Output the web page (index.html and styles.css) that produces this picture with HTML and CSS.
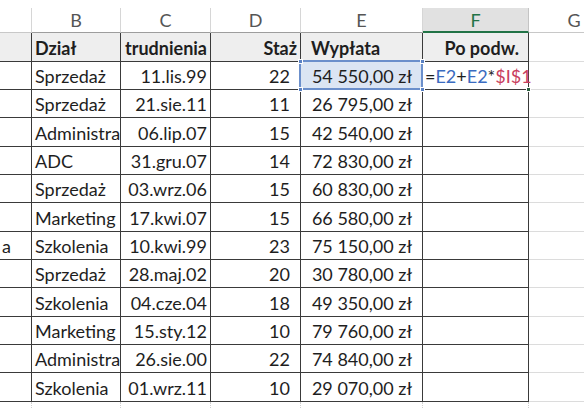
FILE: index.html
```html
<!DOCTYPE html>
<html lang="pl">
<head>
<meta charset="utf-8">
<title>Arkusz</title>
<link rel="stylesheet" href="styles.css">
</head>
<body>
<div class="sheet">
  <div class="row hdr">
    <div class="c"></div>
    <div class="c">B</div>
    <div class="c">C</div>
    <div class="c">D</div>
    <div class="c">E</div>
    <div class="c act">F</div>
    <div class="c g">G</div>
  </div>
  <div class="row r1">
    <div class="c"></div>
    <div class="c bold">Dział</div>
    <div class="c bold right">trudnienia</div>
    <div class="c bold right">Staż</div>
    <div class="c bold indent">Wypłata</div>
    <div class="c bold right pad">Po podw.</div>
    <div class="c g"></div>
  </div>
  <div class="row">
    <div class="c"></div>
    <div class="c">Sprzedaż</div>
    <div class="c right">11.lis.99</div>
    <div class="c right num">22</div>
    <div class="c right num sel">54 550,00 zł<span class="h tl"></span><span class="h tr"></span><span class="h bl"></span><span class="h br"></span></div>
    <div class="c edit"><span>=</span><span class="ref1">E2</span><span>+</span><span class="ref1">E2</span><span>*</span><span class="ref2">$I$1</span><span class="caret"></span><span class="h fh"></span></div>
    <div class="c g"></div>
  </div>
  <div class="row">
    <div class="c"></div>
    <div class="c">Sprzedaż</div>
    <div class="c right">21.sie.11</div>
    <div class="c right num">11</div>
    <div class="c right num">26 795,00 zł</div>
    <div class="c"></div>
    <div class="c g"></div>
  </div>
  <div class="row tall">
    <div class="c"></div>
    <div class="c">Administracja</div>
    <div class="c right">06.lip.07</div>
    <div class="c right num">15</div>
    <div class="c right num">42 540,00 zł</div>
    <div class="c"></div>
    <div class="c g"></div>
  </div>
  <div class="row">
    <div class="c"></div>
    <div class="c">ADC</div>
    <div class="c right">31.gru.07</div>
    <div class="c right num">14</div>
    <div class="c right num">72 830,00 zł</div>
    <div class="c"></div>
    <div class="c g"></div>
  </div>
  <div class="row">
    <div class="c"></div>
    <div class="c">Sprzedaż</div>
    <div class="c right">03.wrz.06</div>
    <div class="c right num">15</div>
    <div class="c right num">60 830,00 zł</div>
    <div class="c"></div>
    <div class="c g"></div>
  </div>
  <div class="row tall">
    <div class="c"></div>
    <div class="c">Marketing</div>
    <div class="c right">17.kwi.07</div>
    <div class="c right num">15</div>
    <div class="c right num">66 580,00 zł</div>
    <div class="c"></div>
    <div class="c g"></div>
  </div>
  <div class="row">
    <div class="c tight">a</div>
    <div class="c">Szkolenia</div>
    <div class="c right">10.kwi.99</div>
    <div class="c right num">23</div>
    <div class="c right num">75 150,00 zł</div>
    <div class="c"></div>
    <div class="c g"></div>
  </div>
  <div class="row">
    <div class="c"></div>
    <div class="c">Sprzedaż</div>
    <div class="c right">28.maj.02</div>
    <div class="c right num">20</div>
    <div class="c right num">30 780,00 zł</div>
    <div class="c"></div>
    <div class="c g"></div>
  </div>
  <div class="row tall">
    <div class="c"></div>
    <div class="c">Szkolenia</div>
    <div class="c right">04.cze.04</div>
    <div class="c right num">18</div>
    <div class="c right num">49 350,00 zł</div>
    <div class="c"></div>
    <div class="c g"></div>
  </div>
  <div class="row">
    <div class="c"></div>
    <div class="c">Marketing</div>
    <div class="c right">15.sty.12</div>
    <div class="c right num">10</div>
    <div class="c right num">79 760,00 zł</div>
    <div class="c"></div>
    <div class="c g"></div>
  </div>
  <div class="row">
    <div class="c"></div>
    <div class="c">Administracja</div>
    <div class="c right">26.sie.00</div>
    <div class="c right num">22</div>
    <div class="c right num">74 840,00 zł</div>
    <div class="c"></div>
    <div class="c g"></div>
  </div>
  <div class="row tall">
    <div class="c"></div>
    <div class="c">Szkolenia</div>
    <div class="c right">01.wrz.11</div>
    <div class="c right num">10</div>
    <div class="c right num">29 070,00 zł</div>
    <div class="c"></div>
    <div class="c g"></div>
  </div>
  <div class="row tail">
    <div class="c"></div>
    <div class="c"></div>
    <div class="c"></div>
    <div class="c"></div>
    <div class="c"></div>
    <div class="c"></div>
    <div class="c g"></div>
  </div>
</div>
</body>
</html>
```
FILE: styles.css
```css
html, body {
  margin: 0;
  background: #ffffff;
}
body {
  font-family: Lato, "Open Sans", "DejaVu Sans", sans-serif;
  overflow: hidden;
}
.sheet {
  width: 584px;
  height: 409px;
  padding-top: 8px;
  box-sizing: border-box;
  overflow: hidden;
}
.row {
  display: grid;
  grid-template-columns: 32px 89px 90px 90px 122px 106px 90px;
  height: 28px;
}
.row.tall { height: 29px; }
.c {
  box-sizing: border-box;
  display: flex;
  align-items: center;
  white-space: nowrap;
  overflow: hidden;
  padding: 1px 3px 0 3px;
  font-size: 18px;
  color: #1e1e1e;
  border-right: 1px solid #3a3a3a;
  border-bottom: 1px solid #3a3a3a;
}
.c.g {
  border-right: none;
  border-bottom: 1px solid #dcdcdc;
}
.right { justify-content: flex-end; }
.num { padding-right: 10px; }
.pad { padding-right: 9px; }
.indent { padding-left: 10px; }
.bold { font-weight: 700; }
.tight { padding-left: 2px; }

/* column headers */
.hdr { height: 25px; }
.hdr .c {
  justify-content: center;
  color: #555555;
  font-size: 18px;
  padding: 0;
  border-right: 1px solid #d6d6d6;
  border-bottom: 1px solid #9d9d9d;
}
.hdr .c:first-child { border-bottom-color: #c8c8c8; }
.hdr .c.g { border-bottom: 1px solid #c8c8c8; border-right: none; }
.hdr .c.act {
  background: #e1e1e1;
  color: #217346;
  border-bottom: 2px solid #217346;
  border-right-color: #c4c4c4;
}

/* first row header */
.r1 { height: 29px; }
.r1 .c { background: #eeeeee; }
.r1 .c.g { background: #ffffff; }

/* selection of E2 */
.sel {
  position: relative;
  overflow: visible;
  background: #dbe5f3;
}
.sel::before {
  content: "";
  position: absolute;
  left: -2px;
  top: -2px;
  right: -1px;
  bottom: -1px;
  border: 2px solid #6b8fcb;
  pointer-events: none;
}
.h {
  position: absolute;
  width: 5px;
  height: 5px;
  background: #5b82c4;
  border: 1px solid #ffffff;
  box-sizing: border-box;
  z-index: 2;
}
.tl { left: -3px; top: -3px; }
.tr { right: -3px; top: -3px; }
.bl { left: -3px; bottom: -3px; }
.br { right: -3px; bottom: -3px; }

/* edited formula cell F2 */
.edit {
  position: relative;
  overflow: visible;
  padding-left: 2px;
  color: #1e1e1e;
}
.ref1 { color: #3a6bc0; }
.ref2 { color: #c9405e; }
.caret {
  display: inline-block;
  width: 1px;
  height: 19px;
  background: #111111;
  margin-left: 2px;
}
.h.fh {
  right: -3px;
  bottom: -3px;
  background: #2a5f3f;
}

/* partial bottom row */
.tail { height: 20px; }
.tail .c {
  border-bottom: none;
  border-right: 1px dotted #d0d0d0;
}
.tail .c.g { border-right: none; }
```
